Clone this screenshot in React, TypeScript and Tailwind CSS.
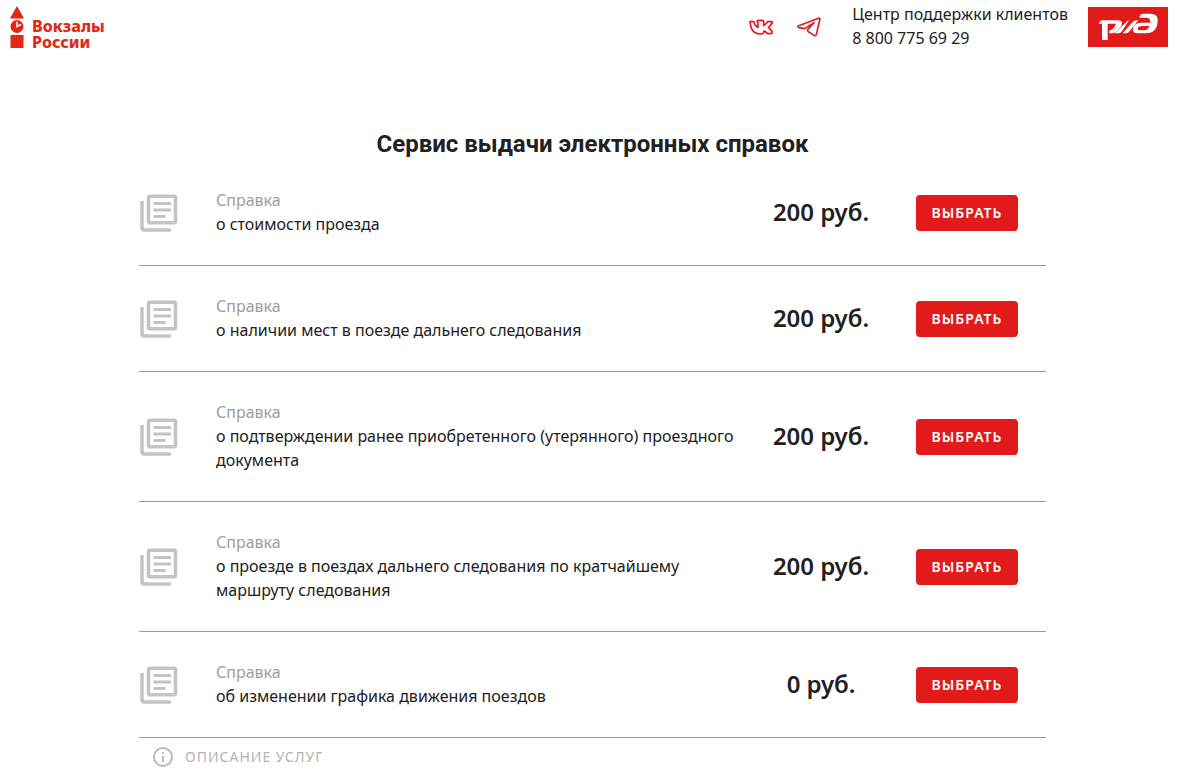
import React from 'react';

interface Certificate {
  id: string;
  title: string;
  price: number;
}

const certificates: Certificate[] = [
  { id: 'cost', title: 'о стоимости проезда', price: 200 },
  { id: 'seats', title: 'о наличии мест в поезде дальнего следования', price: 200 },
  { id: 'confirm', title: 'о подтверждении ранее приобретенного (утерянного) проездного документа', price: 200 },
  { id: 'route', title: 'о проезде в поездах дальнего следования по кратчайшему маршруту следования', price: 200 },
  { id: 'schedule', title: 'об изменении графика движения поездов', price: 0 },
];

const StationLogo: React.FC = () => (
  <a href="#" className="flex items-start gap-2 text-[#e52713]">
    <svg width="14" height="42" viewBox="0 0 14 42" fill="currentColor" aria-hidden="true">
      <path d="M7 0l7 12.5H0z" />
      <circle cx="7" cy="20.5" r="6.5" />
      <path d="M7 15.5v5l4-2" fill="none" stroke="#fff" strokeWidth="1.5" />
      <path d="M0.5 29h13v13H0.5z" />
    </svg>
    <span className="mt-3 text-base leading-4 font-extrabold">
      Вокзалы
      <br />
      России
    </span>
  </a>
);

const VkIcon: React.FC = () => (
  <svg width="24" height="16" viewBox="0 0 72 48" fill="none" stroke="#e21a1a" strokeWidth="5" strokeLinejoin="round" aria-hidden="true">
    <path d="M3 8h11q3 10 11 17 2 1 2-2V12l-3-5q1-3 5-3h12q3 0 3 3v13q8-5 12-12h13q2 0 1 3-5 9-12 14 7 6 11 12 2 6-3 7h-9q-4-2-11-8-2 0-3 5-1 4-6 4-20 1-29-15Q4 20 3 8z" />
  </svg>
);

const TelegramIcon: React.FC = () => (
  <svg width="24" height="20" viewBox="0 0 72 60" fill="none" stroke="#e21a1a" strokeWidth="5" strokeLinejoin="round" aria-hidden="true">
    <path d="M67 3L3 27q-1 4 3 5l17 3 28-18-19 21q-1 4 2 6l18 12q5 1 6-3L69 5q0-2-2-2z" />
  </svg>
);

const RzdLogo: React.FC = () => (
  <svg width="80" height="40" viewBox="0 0 240 120" role="img" aria-label="РЖД">
    <path fill="#e21a1a" d="M0 0h240v120H0z" />
    <g fill="#fff">
      <path d="M33 51q1-11 11-11h46q12 0 12 8 0 8-7 15-11 14-21 16H64v-8q15-5 20-21H59v49H42V50z" />
      <path d="M80 79l38-37q3-2 8-2h-3l-20 31q-5 8-13 8z" />
      <path d="M104 79l30-34q4-5 12-5h5l-25 31q-6 8-13 8z" />
      <path
        fillRule="evenodd"
        d="M154 32q1-12 12-12h21q22 0 22 19 0 40-36 40h-24q-15 0-14-12 2-20 24-20h28q1-15-12-15zM184 57h-22q-12 0-13 8 0 5 6 5h12q13 0 17-13z"
      />
    </g>
  </svg>
);

const PagesIcon: React.FC = () => (
  <svg width="38" height="38" viewBox="0 0 38 38" fill="none" stroke="#c4c4c4" className="shrink-0" aria-hidden="true">
    <path d="M2 7v26.500q0 2.500 2.500 2.500H31" strokeWidth="3.500" />
    <rect x="8.500" y="2.250" width="27" height="26.500" rx="1.500" strokeWidth="3.500" />
    <path d="M13.500 9.500h17.500M13.500 16h17.500M13.500 22.500h12" strokeWidth="3" />
  </svg>
);

const CertificateRow: React.FC<{ item: Certificate }> = ({ item }) => (
  <li className="flex items-center border-b border-[#9a9a9a] pt-7 pb-[27px] pl-px">
    <PagesIcon />
    <div className="ml-[38px] min-w-0 flex-1 pb-0.5 text-base leading-6">
      <p className="text-[#9e9e9e]">Справка</p>
      <p>{item.title}</p>
    </div>
    <div className="w-[150px] shrink-0 pb-0.5 text-center text-2xl font-semibold">{item.price} руб.</div>
    <button
      type="button"
      className="mr-7 ml-5 h-9 w-[102px] shrink-0 rounded bg-[#e21a1a] text-sm font-semibold tracking-[1px] text-white uppercase"
    >
      Выбрать
    </button>
  </li>
);

export default function App() {
  return (
    <div className="bg-white pr-2 font-['Noto_Sans',sans-serif] text-[#212121]">
      <header className="flex items-start justify-between pt-0.5 pr-[17px] pl-2.5">
        <div className="pt-1">
          <StationLogo />
        </div>
        <div className="flex items-start">
          <a href="#" aria-label="ВКонтакте" className="mt-[17px] mr-6">
            <VkIcon />
          </a>
          <a href="#" aria-label="Telegram" className="mt-[15px] mr-[31px]">
            <TelegramIcon />
          </a>
          <div className="mr-5 text-base leading-6">
            <p>Центр поддержки клиентов</p>
            <a href="tel:88007756929">8 800 775 69 29</a>
          </div>
          <a href="#" className="mt-[5px]">
            <RzdLogo />
          </a>
        </div>
      </header>

      <main className="mx-auto max-w-[907px] pt-[78px]">
        <h1 className="text-center font-[Roboto,sans-serif] text-2xl leading-8 font-bold">
          Сервис выдачи электронных справок
        </h1>
        <ul>
          {certificates.map((item) => (
            <CertificateRow key={item.id} item={item} />
          ))}
        </ul>
        <button
          type="button"
          className="flex h-[38px] items-center gap-3 pl-3.5 text-sm tracking-[1px] text-[#b3b3b3] uppercase"
        >
          <svg width="20" height="20" viewBox="0 0 20 20" fill="none" stroke="#b9b9b9" strokeWidth="2" aria-hidden="true">
            <circle cx="10" cy="10" r="9" />
            <path d="M10 9v6M10 5v2" />
          </svg>
          Описание услуг
        </button>
      </main>
    </div>
  );
}
